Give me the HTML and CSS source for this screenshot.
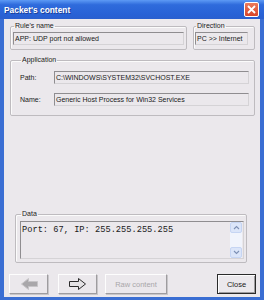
FILE: index.html
```html
<!DOCTYPE html>
<html lang="en">

<head>
    <meta charset="UTF-8">
    <title>Packet's content</title>
    <link rel="stylesheet" href="styles.css">
</head>

<body>

    <div class="window">
        <div class="titlebar">
            <span class="title">Packet's content</span>
            <span class="close-x">
                <svg width="9" height="9" viewBox="0 0 9 9">
                    <path d="M1 1 L8 8 M8 1 L1 8" stroke="#fff" stroke-width="1.8" />
                </svg>
            </span>
        </div>

        <div class="client">
            <div class="row-top">
                <fieldset class="group rule">
                    <legend>Rule's name</legend>
                    <div class="field">APP: UDP port not allowed</div>
                </fieldset>
                <fieldset class="group direction">
                    <legend>Direction</legend>
                    <div class="field">PC &gt;&gt; Internet</div>
                </fieldset>
            </div>

            <fieldset class="group app">
                <legend>Application</legend>
                <div class="line">
                    <span class="lbl">Path:</span>
                    <div class="field">C:\WINDOWS\SYSTEM32\SVCHOST.EXE</div>
                </div>
                <div class="line">
                    <span class="lbl">Name:</span>
                    <div class="field">Generic Host Process for Win32 Services</div>
                </div>
            </fieldset>

            <fieldset class="group data">
                <legend>Data</legend>
                <div class="memo">
                    <div class="memo-text">Port: 67, IP: 255.255.255.255</div>
                    <div class="scroll">
                        <div class="sbtn">
                            <svg width="7" height="5" viewBox="0 0 7 5">
                                <path d="M1 4 L3.5 1.5 L6 4" fill="none" stroke="#7d90b5" stroke-width="1.1" />
                            </svg>
                        </div>
                        <div class="track"></div>
                        <div class="sbtn">
                            <svg width="7" height="5" viewBox="0 0 7 5">
                                <path d="M1 1 L3.5 3.5 L6 1" fill="none" stroke="#7d90b5" stroke-width="1.1" />
                            </svg>
                        </div>
                    </div>
                </div>
            </fieldset>

            <div class="buttons">
                <button class="btn arrow" disabled>
                    <svg width="18" height="12" viewBox="0 0 18 12">
                        <path d="M17.5 3.5 H8.5 V0.5 L1.5 6 L8.5 11.5 V8.5 H17.5 Z" fill="#a9a7aa" stroke="#c6c4c7" stroke-width="1" />
                    </svg>
                </button>
                <button class="btn arrow">
                    <svg width="18" height="12" viewBox="0 0 18 12">
                        <path d="M0.5 3.5 H9.5 V0.5 L16.5 6 L9.5 11.5 V8.5 H0.5 Z" fill="#e4e2e5" stroke="#2b2b2b" stroke-width="1" />
                    </svg>
                </button>
                <button class="btn raw" disabled>Raw content</button>
                <button class="btn close">Close</button>
            </div>
        </div>
    </div>

</body>

</html>
```

FILE: styles.css
```css
body {
    margin: 0;
    font-family: "Liberation Sans", Arial, sans-serif;
    font-size: 7px;
    color: #1a1a1a;
}

.window {
    width: 264px;
    height: 300px;
    box-sizing: border-box;
    display: flex;
    flex-direction: column;
    background: #3a6ed3;
    padding: 0 4px 3px 4px;
}

.titlebar {
    height: 19px;
    margin: 0 -4px;
    padding: 0 5px 0 4px;
    display: flex;
    align-items: center;
    justify-content: space-between;
    background: linear-gradient(#5d9af5, #2f6bdc 25%, #2862d6 75%, #2a5fcf);
}

.title {
    color: #fff;
    font-weight: bold;
    font-size: 8.4px;
    text-shadow: 1px 1px 0 #1b3f98;
}

.close-x {
    width: 13px;
    height: 13px;
    display: flex;
    align-items: center;
    justify-content: center;
    background: linear-gradient(#ec7b5c, #d8452a);
    border: 1px solid #fff;
    border-radius: 2px;
}

.client {
    flex: 1;
    display: flex;
    flex-direction: column;
    background: #ebe8ec;
    padding: 0 5px 3px 6px;
}

.row-top {
    display: flex;
    gap: 6px;
    margin-top: 2px;
}

.group {
    margin: 0;
    padding: 0 2px 4px 2px;
    border: 1px solid #bebbbf;
    border-radius: 2px;
    box-shadow: inset 1px 1px 0 #fbfbfb;
}

.group legend {
    padding: 0 1px;
    margin-left: 1px;
    line-height: 10px;
    color: #1a1a1a;
}

.field {
    height: 11px;
    line-height: 11px;
    padding-left: 1px;
    border: 1px solid;
    border-color: #8f8d90 #d5d3d6 #d5d3d6 #8f8d90;
    background: #ebe8ec;
    white-space: nowrap;
    overflow: hidden;
}

.rule {
    width: 177px;
    box-sizing: border-box;
    padding-top: 1px;
}

.direction {
    width: 62px;
    box-sizing: border-box;
    padding: 1px 6px 4px 1px;
}

.app {
    margin-top: 5px;
    padding: 6px 5px 9px 9px;
    display: flex;
    flex-direction: column;
    gap: 9px;
}

.line {
    display: flex;
    align-items: center;
}

.lbl {
    width: 34px;
    flex: none;
}

.line .field {
    flex: 1;
}

.data {
    margin: auto 8px 0 5px;
    padding: 2px 2px 3px 4px;
}

.data legend {
    margin-left: 1px;
}

.memo {
    height: 38px;
    box-sizing: border-box;
    display: flex;
    border: 1px solid;
    border-color: #8f8d90 #d5d3d6 #d5d3d6 #8f8d90;
}

.memo-text {
    flex: 1;
    font-family: "Liberation Mono", "Courier New", monospace;
    font-size: 8.7px;
    padding: 3px 0 0 1px;
}

.scroll {
    width: 12px;
    display: flex;
    flex-direction: column;
    background: #f1f4fc;
    margin-right: 1px;
}

.sbtn {
    height: 11px;
    display: flex;
    align-items: center;
    justify-content: center;
    background: #dbe5f9;
    border: 1px solid #c6d5f3;
    border-radius: 2px;
    box-sizing: border-box;
}

.track {
    flex: 1;
}

.buttons {
    display: flex;
    margin: 11px -1px 0 -1px;
}

.btn {
    height: 20px;
    width: 39px;
    padding: 0;
    display: flex;
    align-items: center;
    justify-content: center;
    font-family: "Liberation Sans", Arial, sans-serif;
    font-size: 7.5px;
    color: #1a1a1a;
    background: #ebe8ec;
    border: 1px solid;
    border-color: #fdfdfd #9e9c9f #9e9c9f #fdfdfd;
    box-shadow: 1px 1px 0 #c8c6c9;
}

.btn + .btn {
    margin-left: 10px;
}

.raw {
    width: 62px;
    color: #a9a7aa;
}

.btn.raw {
    margin-left: 8px;
}

.btn.close {
    margin-left: auto;
    border: 1px solid #2a2a2a;
    box-shadow: inset 1px 1px 0 #fdfdfd, inset -1px -1px 0 #9e9c9f;
}
```
